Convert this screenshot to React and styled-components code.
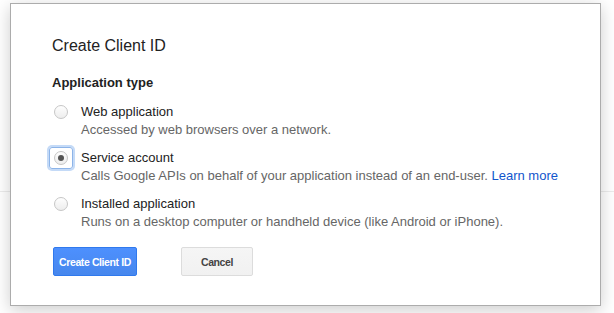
import React from 'react';
import styled, { createGlobalStyle } from 'styled-components';

const GlobalStyle = createGlobalStyle`
  html, body {
    margin: 0;
    padding: 0;
    background: #ffffff;
  }
  body {
    font-family: "Liberation Sans", Arial, sans-serif;
  }
`;

const Backdrop = styled.div`
  width: 614px;
  height: 313px;
  box-sizing: border-box;
  padding: 3px 0 0 10px;
  background: linear-gradient(to bottom, transparent 191px, #ececec 191px, #ececec 192px, transparent 192px);
`;

const Dialog = styled.div`
  width: 591px;
  height: 303px;
  box-sizing: border-box;
  background: #fff;
  border: 1px solid #acacac;
  box-shadow: 0 4px 16px rgba(0, 0, 0, 0.2);
  padding: 31px 0 0 41px;
`;

const Title = styled.h2`
  margin: 0;
  font-size: 16px;
  font-weight: normal;
  line-height: 22px;
  color: #222;
`;

const Label = styled.div`
  margin-top: 17px;
  font-size: 13px;
  font-weight: bold;
  line-height: 18px;
  color: #222;
`;

const Options = styled.div`
  margin-top: 11px;
  display: flex;
  flex-direction: column;
  gap: 10px;
`;

const Option = styled.div`
  display: flex;
  align-items: flex-start;
`;

const RadioWrap = styled.div`
  width: 24px;
  height: 22px;
  margin: -2px 2px 0 -3px;
  box-sizing: border-box;
  border-radius: 3px;
  display: flex;
  align-items: center;
  justify-content: center;
  ${(p) => p.$focused && `
    border: 1px solid #8db4e8;
    box-shadow: 0 0 0 2px #c4daf7;
  `}
`;

const Radio = styled.span`
  width: 14px;
  height: 14px;
  box-sizing: border-box;
  border-radius: 50%;
  border: 1px solid #c6c6c6;
  background: linear-gradient(#fefefe, #ededed);
  display: flex;
  align-items: center;
  justify-content: center;

  &::after {
    content: '';
    display: ${(p) => (p.$checked ? 'block' : 'none')};
    width: 6px;
    height: 6px;
    border-radius: 50%;
    background: #555;
  }
`;

const OptionText = styled.div`
  padding-left: 6px;
`;

const OptionName = styled.div`
  font-size: 13px;
  line-height: 18px;
  color: #222;
`;

const OptionDesc = styled.div`
  font-size: 13px;
  line-height: 18px;
  color: #666;
`;

const Link = styled.a`
  color: #15c;
  text-decoration: none;
`;

const Actions = styled.div`
  margin-top: 16px;
  display: flex;
  gap: 44px;
  padding-left: 1px;
`;

const Button = styled.button`
  width: ${(p) => (p.$primary ? '84px' : '72px')};
  height: 29px;
  box-sizing: border-box;
  padding: 0;
  border-radius: 2px;
  font-family: "Liberation Sans", Arial, sans-serif;
  font-size: 10.5px;
  letter-spacing: -0.4px;
  font-weight: bold;
  border: 1px solid ${(p) => (p.$primary ? '#3079ed' : '#dcdcdc')};
  background: ${(p) => (p.$primary ? 'linear-gradient(#4d90fe, #4787ed)' : 'linear-gradient(#f5f5f5, #f1f1f1)')};
  color: ${(p) => (p.$primary ? '#fff' : '#444')};
`;

const options = [
  { name: 'Web application', desc: 'Accessed by web browsers over a network.' },
  { name: 'Service account', desc: 'Calls Google APIs on behalf of your application instead of an end-user.', link: 'Learn more', checked: true },
  { name: 'Installed application', desc: 'Runs on a desktop computer or handheld device (like Android or iPhone).' },
];

const App = () => (
  <>
    <GlobalStyle />
    <Backdrop>
      <Dialog>
        <Title>Create Client ID</Title>
        <Label>Application type</Label>
        <Options>
          {options.map((o) => (
            <Option key={o.name}>
              <RadioWrap $focused={o.checked}>
                <Radio $checked={o.checked} />
              </RadioWrap>
              <OptionText>
                <OptionName>{o.name}</OptionName>
                <OptionDesc>
                  {o.desc}
                  {o.link && <> <Link href="#">{o.link}</Link></>}
                </OptionDesc>
              </OptionText>
            </Option>
          ))}
        </Options>
        <Actions>
          <Button $primary>Create Client ID</Button>
          <Button>Cancel</Button>
        </Actions>
      </Dialog>
    </Backdrop>
  </>
);

export default App;
